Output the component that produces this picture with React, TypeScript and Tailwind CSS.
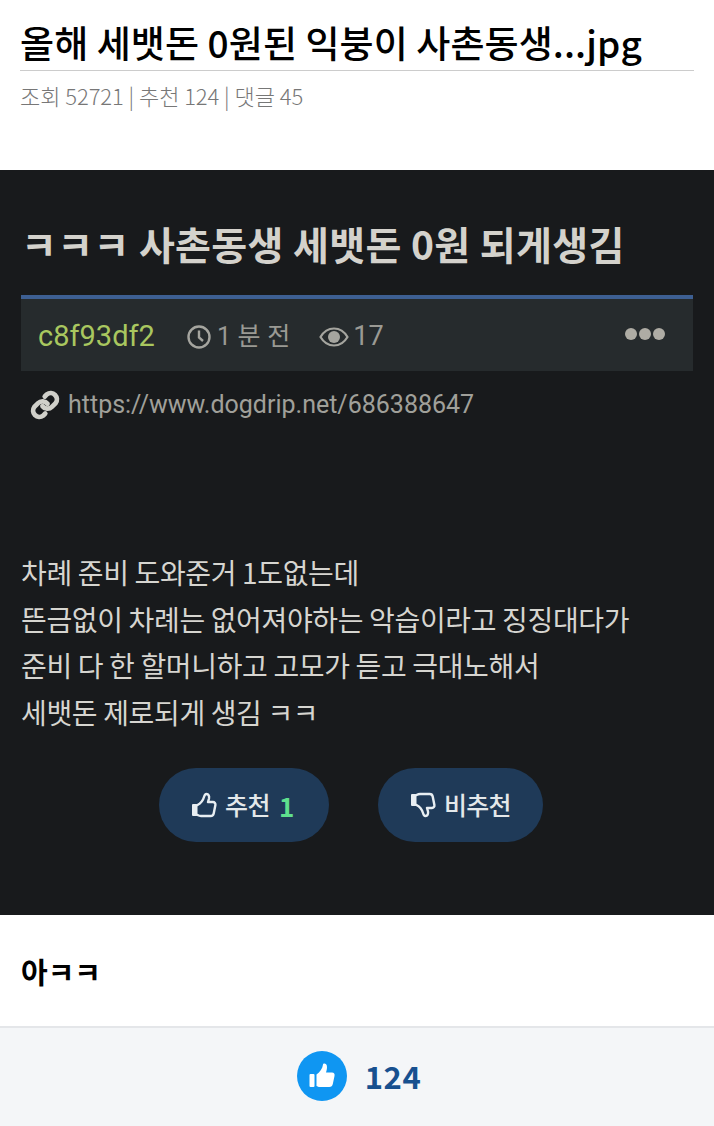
import React from 'react';

const FONT = "font-['Noto_Sans_CJK_KR','Noto_Sans',sans-serif]";
const ROBOTO = "font-['Roboto','Noto_Sans_CJK_KR',sans-serif]";

const ThumbOutline = ({ down = false }: { down?: boolean }) => (
  <svg width="28" height="28" viewBox="0 0 28 28" fill="none" className={down ? 'rotate-180 -scale-x-100' : ''}>
    <rect x="2" y="13" width="5.5" height="12" rx="1" fill="#e8eef2" />
    <path
      d="M7.5 14c3-1.500 5.500-4.500 6.500-8 .4-1.500 1-3 2.500-3 2 0 3 2 2.500 4.500L18 11h5c1.600 0 2.700 1.400 2.400 3l-1.700 8.500c-.3 1.500-1.500 2.500-3 2.500H11c-1.500 0-2.500-.5-3.500-1"
      stroke="#e8eef2"
      strokeWidth="2.400"
      strokeLinejoin="round"
      strokeLinecap="round"
    />
  </svg>
);

export default function App() {
  return (
    <div className={`w-[714px] h-[1126px] bg-white flex flex-col overflow-hidden ${FONT}`}>
      {/* Title */}
      <div className="h-[170px] shrink-0 px-5 pt-[15px]">
        <h1 className="text-[37px] leading-[54px] font-medium text-black tracking-[0.1px] whitespace-nowrap">
          올해 세뱃돈 0원된 익붕이 사촌동생...jpg
        </h1>
        <div className="mt-[1px] border-t border-[#cccccc]" />
        <div className="mt-[10px] text-[22px] leading-[28px] font-light text-[#777777] tracking-[-0.05px]">
          조회 52721 | 추천 124 | 댓글 45
        </div>
      </div>

      {/* Captured post */}
      <div className="h-[745px] shrink-0 bg-[#181a1c] px-[21px] pt-[46px]">
        <div className="text-[39px] leading-[55px] font-bold text-[#d4d2cc] tracking-[0.35px] whitespace-nowrap">
          ㅋㅋㅋ 사촌동생 세뱃돈 0원 되게생김
        </div>
        <div className="mt-[24px] h-[76px] bg-[#262b2d] border-t-[4px] border-[#3d5f92] flex items-center pt-[3px] pl-[17px] pr-[27px] text-[#9a9a94]">
          <span className={`${ROBOTO} text-[29px] text-[#a9c75f]`}>c8f93df2</span>
          <svg width="26" height="26" viewBox="0 0 26 26" fill="none" className="ml-[31px]">
            <circle cx="13" cy="13" r="10.500" stroke="#a5a59f" strokeWidth="2.400" />
            <path d="M13 6.500V13.500L17 17" stroke="#a5a59f" strokeWidth="2.400" />
          </svg>
          <span className={`${ROBOTO} ml-[5px] text-[25px] tracking-[0.2px]`}>1 분 전</span>
          <svg width="30" height="20" viewBox="0 0 30 20" fill="none" className="ml-[29px]">
            <path d="M1.500 10C5 4 10 1.500 15 1.500S25 4 28.500 10C25 16 20 18.500 15 18.500S5 16 1.500 10Z" stroke="#a5a59f" strokeWidth="2.200" />
            <circle cx="15" cy="10" r="6" fill="#a5a59f" />
          </svg>
          <span className={`${ROBOTO} ml-[4px] text-[27px]`}>17</span>
          <div className="ml-auto flex gap-[2px] -translate-y-[3px] translate-x-[-1px]">
            <span className="size-[12px] rounded-full bg-[#aeaca4]" />
            <span className="size-[12px] rounded-full bg-[#aeaca4]" />
            <span className="size-[12px] rounded-full bg-[#aeaca4]" />
          </div>
        </div>
        <div className="mt-[12px] ml-[9px] flex items-center h-[44px]">
          <svg width="30" height="30" viewBox="0 0 24 24" fill="none" stroke="#d0d0ca" strokeWidth="3.800" strokeLinecap="round">
            <path d="M10 13a5 5 0 0 0 7.500.5l3-3a5 5 0 0 0-7-7l-1.700 1.700" />
            <path d="M14 11a5 5 0 0 0-7.500-.5l-3 3a5 5 0 0 0 7 7l1.700-1.700" />
          </svg>
          <span className={`${ROBOTO} ml-[8px] text-[25px] text-[#a0a09a] whitespace-nowrap`}>https://www.dogdrip.net/686388647</span>
        </div>

        <div className="mt-[122px] text-[28px] leading-[46.500px] text-[#d6d5d0] tracking-[-0.35px] whitespace-nowrap">
          <p>차례 준비 도와준거 1도없는데</p>
          <p>뜬금없이 차례는 없어져야하는 악습이라고 징징대다가</p>
          <p>준비 다 한 할머니하고 고모가 듣고 극대노해서</p>
          <p>세뱃돈 제로되게 생김 ㅋㅋ</p>
        </div>

        <div className="mt-[33px] ml-[138px] flex gap-[49px]">
          <div className="w-[170px] h-[74px] rounded-full bg-[#1f3a58] flex items-center pl-[31px]">
            <ThumbOutline />
            <span className="ml-[7px] text-[25px] font-medium text-[#e4e8ea] tracking-[-0.5px]">추천</span>
            <span className="ml-[9px] text-[26px] font-bold text-[#5fe08e]">1</span>
          </div>
          <div className="w-[165px] h-[74px] rounded-full bg-[#1f3a58] flex items-center pl-[31px]">
            <ThumbOutline down />
            <span className="ml-[7px] text-[25px] font-medium text-[#e4e8ea] tracking-[-0.8px]">비추천</span>
          </div>
        </div>
      </div>

      {/* Comment text */}
      <div className="h-[113px] shrink-0 bg-white px-[21px] pt-[34px] border-b-2 border-[#e4e6e9]">
        <div className="text-[29px] leading-[44px] font-bold text-black">아ㅋㅋ</div>
      </div>

      {/* Like bar */}
      <div className="flex-1 bg-[#f4f6f8] flex items-center justify-center pb-[2px] pl-[4px]">
        <div className="size-[50px] rounded-full bg-[#0f96f2] flex items-center justify-center">
          <svg width="30" height="30" viewBox="0 0 30 30" fill="white">
            <rect x="2.500" y="13" width="5" height="13" rx="1" />
            <path d="M9.500 13.500C13 11 15.500 7.500 16 3.500c.2-1.500 4-1.500 4 2.500 0 2-.5 4-1 5.500h6c2 0 3 1.500 2.500 3.500l-1.700 8c-.4 1.800-1.500 3-3.500 3H13c-1.500 0-2.500-.5-3.500-1z" />
          </svg>
        </div>
        <span className="ml-[18px] text-[31px] font-bold text-[#17508f] tracking-[0.5px]">124</span>
      </div>
    </div>
  );
}
